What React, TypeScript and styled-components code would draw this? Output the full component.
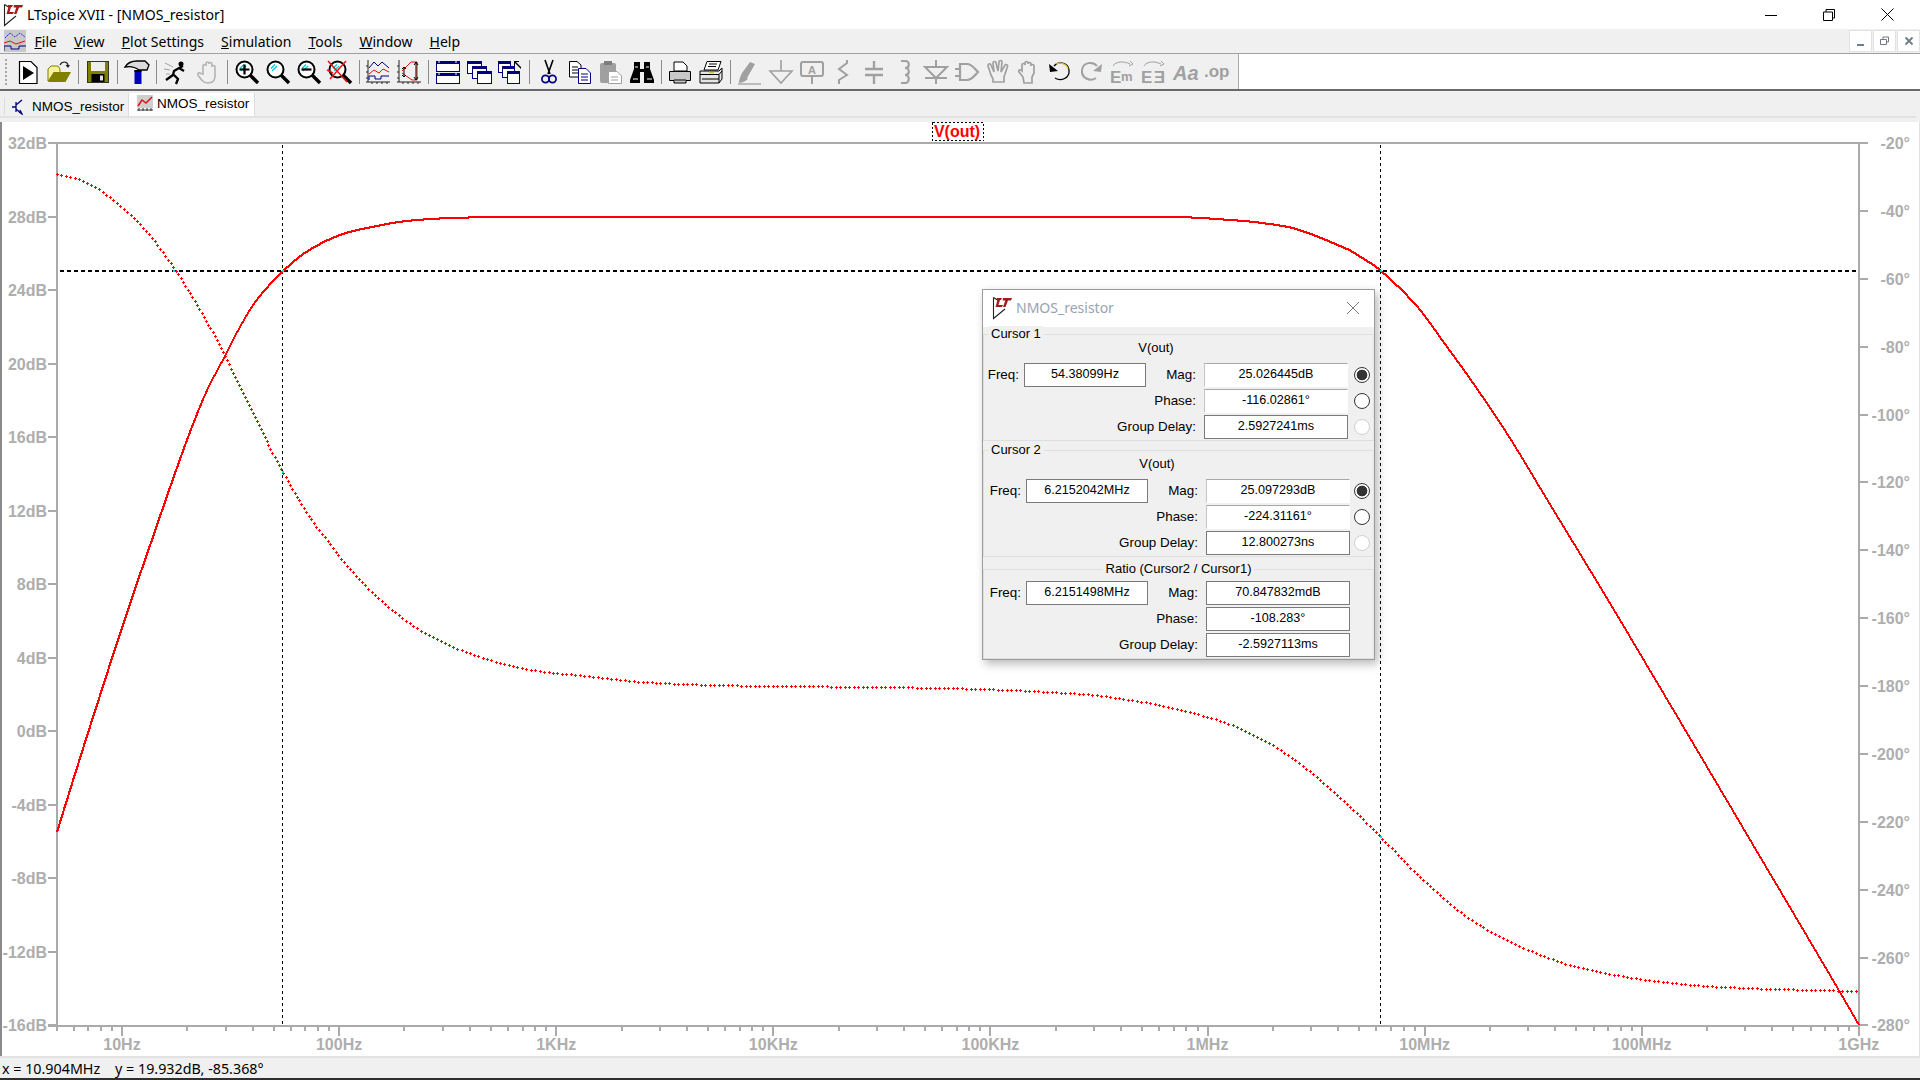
import React from 'react';
import styled, { createGlobalStyle } from 'styled-components';

const UI_FONT = '"Noto Sans", "Open Sans", sans-serif';
const ARIAL = '"Liberation Sans", Arial, sans-serif';

const GlobalStyle = createGlobalStyle`
  html, body { margin: 0; padding: 0; background: #fff; overflow: hidden; }
  #root { width: 1920px; height: 1080px; }
`;

const Page = styled.div`
  width: 1920px;
  height: 1080px;
  display: flex;
  flex-direction: column;
  background: #f0f0f0;
  font-family: ${UI_FONT};
  color: #000;
  overflow: hidden;
`;

/* ---------- title + menu ---------- */

const TitleBar = styled.div`
  height: 29px;
  flex: none;
  background: #fff;
  display: flex;
  align-items: center;
  padding-left: 2px;
`;

const TitleText = styled.span`
  font-size: 14.1px;
  margin-left: 3px;
`;

const WindowButtons = styled.div`
  margin-left: auto;
  margin-right: 3px;
  display: flex;
`;

const WindowButton = styled.div`
  width: 58.5px;
  height: 29px;
  display: flex;
  align-items: center;
  justify-content: center;
`;

const MenuBar = styled.div`
  height: 25px;
  flex: none;
  box-sizing: border-box;
  border-bottom: 1px solid #a0a0a0;
  display: flex;
  align-items: center;
  padding-left: 4px;
`;

const MenuItems = styled.div`
  display: flex;
`;

const MenuItem = styled.span`
  font-size: 14px;
  padding: 0 8.5px;
  &::first-letter { text-decoration: underline; }
`;

const MdiButtons = styled.div`
  margin-left: auto;
  display: flex;
  gap: 1px;
  align-self: flex-start;
  margin-top: 1px;
`;

const MdiButton = styled.div`
  width: 23px;
  height: 22px;
  box-sizing: border-box;
  background: #fff;
  border: 1px solid #e2e2e2;
  display: flex;
  align-items: center;
  justify-content: center;
`;

/* ---------- toolbar ---------- */

const ToolBar = styled.div`
  height: 37px;
  flex: none;
  box-sizing: border-box;
  border-bottom: 2px solid #696969;
  background: #fff;
  display: flex;
`;

const ToolStrip = styled.div`
  width: 1239px;
  box-sizing: border-box;
  background: #f0f0f0;
  border-right: 1px solid #a8a8a8;
  display: flex;
  align-items: center;
  padding-left: 5px;
`;

const Gripper = styled.div`
  width: 2px;
  height: 26px;
  margin-right: 5.5px;
  background: repeating-linear-gradient(to bottom, #a8a8a8 0 2px, transparent 2px 4px);
`;

const Tool = styled.div`
  width: 31.05px;
  height: 26px;
  flex: none;
  display: flex;
  align-items: center;
  justify-content: center;
`;

const ToolSep = styled.div<{ $wide?: boolean }>`
  width: 1px;
  height: 24px;
  flex: none;
  margin: 0 ${p => (p.$wide ? 3.55 : 3.25)}px;
  background: #8c8c8c;
`;

const Glyph = styled.svg`
  width: 24px;
  height: 24px;
  display: block;
  overflow: visible;
`;

const GlyphText = styled.text<{ $size: number; $italic?: boolean }>`
  font-family: ${ARIAL};
  font-weight: bold;
  font-size: ${p => p.$size}px;
  font-style: ${p => (p.$italic ? 'italic' : 'normal')};
  fill: #a0a0a0;
`;

/* ---------- tabs ---------- */

const TabStrip = styled.div`
  height: 27px;
  flex: none;
  box-sizing: border-box;
  border-bottom: 2px solid #e2e2e2;
  margin-right: 4px;
  display: flex;
  align-items: flex-end;
  padding-left: 4px;
`;

const Tab = styled.div<{ $active?: boolean }>`
  width: ${p => (p.$active ? 127 : 124)}px;
  height: ${p => (p.$active ? 23 : 17)}px;
  margin-bottom: ${p => (p.$active ? 0 : 1)}px;
  box-sizing: border-box;
  background: ${p => (p.$active ? '#fff' : '#f0f0f0')};
  border-left: 1px solid #dcdcdc;
  border-right: ${p => (p.$active ? '1px solid #dcdcdc' : 'none')};
  display: flex;
  align-items: center;
  font-family: ${ARIAL};
  font-size: 13.5px;
  padding-left: ${p => (p.$active ? 8 : 6)}px;
  gap: ${p => (p.$active ? 4 : 5)}px;
  padding-bottom: ${p => (p.$active ? 3 : 0)}px;
`;

const TabIcon = styled.svg`
  width: 16px;
  height: 16px;
  flex: none;
`;

/* ---------- plot ---------- */

const PlotPane = styled.div`
  margin-top: 4px;
  flex: 1;
  position: relative;
  background: #fff;
  border-left: 2px solid #8a8a8a;
  border-right: 1px solid #e2e2e2;
  overflow: hidden;
`;

const PlotSvg = styled.svg`
  display: block;
  margin-left: -2px;
  width: 1920px;
  height: 935px;
`;

const AxisLabel = styled.text`
  font-family: ${ARIAL};
  font-weight: bold;
  font-size: 16px;
  fill: #aeaeae;
`;

const TraceName = styled.text`
  font-family: ${ARIAL};
  font-weight: bold;
  font-size: 16px;
  fill: #ff0000;
`;

const StatusBar = styled.div`
  height: 22px;
  flex: none;
  box-sizing: border-box;
  border-top: 2px solid #e2e2e2;
  display: flex;
  align-items: center;
  padding-left: 2px;
  font-size: 14.3px;
  white-space: pre;
`;

const BottomEdge = styled.div`
  height: 2px;
  flex: none;
  background: #2f2f2f;
`;

/* ---------- cursor dialog ---------- */

const Dialog = styled.div`
  position: absolute;
  left: 980px;
  top: 167px;
  width: 393px;
  height: 371px;
  box-sizing: border-box;
  border: 1px solid #9c9c9c;
  background: #f0f0f0;
  box-shadow: 3px 4px 9px rgba(0, 0, 0, 0.28);
  display: flex;
  flex-direction: column;
`;

const DialogTitle = styled.div`
  height: 37px;
  flex: none;
  box-sizing: border-box;
  background: #fff;
  display: flex;
  align-items: center;
  padding-left: 8px;
  padding-bottom: 2px;
`;

const DialogName = styled.span`
  font-size: 14px;
  color: #98a4b0;
  margin-left: 3px;
`;

const DialogClose = styled.svg`
  width: 14px;
  height: 14px;
  margin-left: auto;
  margin-right: 14px;
`;

const Group = styled.div<{ $inset?: boolean; $ratio?: boolean }>`
  position: relative;
  box-sizing: border-box;
  margin-top: ${p => (p.$ratio ? 12 : p.$inset ? 9 : 7)}px;
  border: 1px solid #dedede;
  border-right-color: #e6e6e6;
  padding: ${p => (p.$ratio ? 11 : 2)}px 0 1px ${p => (p.$inset ? 2 : 0)}px;
  display: grid;
  grid-template-columns: 40px 122px 58px 144px 1fr;
  grid-auto-rows: 24px;
  row-gap: 2px;
  font-family: ${ARIAL};
  font-size: 13px;
`;

const Legend = styled.span<{ $center?: boolean }>`
  position: absolute;
  top: -9px;
  left: ${p => (p.$center ? '50%' : '4px')};
  transform: ${p => (p.$center ? 'translateX(-50%)' : 'none')};
  padding: 0 3px;
  background: #f0f0f0;
  line-height: 16px;
  white-space: nowrap;
`;

const TraceLabel = styled.div`
  grid-column: 1 / -1;
  padding-right: 45px;
  text-align: center;
  line-height: 22px;
`;

const Label = styled.div<{ $wide?: boolean; $short?: boolean }>`
  grid-column: ${p => (p.$wide ? '1 / 4' : 'auto')};
  padding-right: ${p => (p.$short ? 5 : 8)}px;
  text-align: right;
  font-size: 13.4px;
  line-height: 24px;
  white-space: nowrap;
`;

const Field = styled.div<{ $soft?: boolean }>`
  box-sizing: border-box;
  background: #fff;
  text-align: center;
  font-size: 12.6px;
  line-height: 21px;
  border: 1px solid ${p => (p.$soft ? '#fff' : '#7a7a7a')};
  border-top-color: ${p => (p.$soft ? '#a8a8a8' : '#7a7a7a')};
  border-left-color: ${p => (p.$soft ? '#c4c4c4' : '#7a7a7a')};
`;

const Radio = styled.div<{ $on?: boolean; $off?: boolean; $inset?: boolean }>`
  width: 16px;
  height: 16px;
  box-sizing: border-box;
  align-self: center;
  margin-left: ${p => (p.$inset ? 4 : 6)}px;
  border-radius: 50%;
  border: 1.5px solid ${p => (p.$off ? '#d0d0d0' : '#333')};
  background: ${p =>
    p.$on ? 'radial-gradient(circle, #333 0 5px, #fff 5.7px)' : '#fff'};
`;

/* ---------- trace data, in page pixels ---------- */

type Pt = [number, number];

const magPoints: Pt[] = [
  [57, 832], [78, 764.5], [97.4, 703.5], [116.5, 644.5], [135.7, 587], [151, 542.5],
  [173.3, 478], [190, 432], [206.7, 391], [225, 356], [240, 327], [256.7, 300],
  [282.7, 271.5], [306.7, 251.7], [340, 235], [373.3, 226.7], [406.7, 221], [460, 217.7],
  [560, 216.8], [700, 216.8], [1050, 216.8], [1175, 217], [1224, 219.5], [1262, 223], [1298, 229.6],
  [1347, 249], [1360, 256.5], [1380.7, 270.7], [1416.7, 306], [1443.3, 341.7], [1476.7, 388.3],
  [1510, 438.3], [1543.3, 493.3], [1576.7, 548.3], [1610, 603.3], [1655, 679],
  [1714.5, 779.5], [1754, 846.5], [1793.6, 913.5], [1833, 980.3], [1859, 1025],
];

const phasePoints: Pt[] = [
  [57, 174.3], [83.3, 181], [106.7, 195], [140, 224], [173.3, 267.3], [206.7, 321.7],
  [225, 356.7], [240, 386.7], [273.3, 455], [282.7, 471.7], [306.7, 513], [327, 540],
  [346, 565], [384.4, 603.3], [422.7, 631.7], [461, 650], [499.2, 662.7], [537.5, 670.7],
  [575.8, 675], [640, 681.7], [700, 684.5], [774, 686], [880, 687], [980, 689],
  [1060, 692.5], [1102, 696], [1165, 706], [1224, 722], [1240, 729], [1279.5, 749.5],
  [1319, 779], [1358.6, 815], [1380.4, 836.7], [1418, 875], [1457.5, 910], [1497, 935],
  [1536.6, 953.3], [1576, 966.7], [1635.4, 978.3], [1694.7, 985], [1754, 988.3], [1856, 991],
];

// y(x) through the read points, sampled one pixel apart
const sample = (pts: Pt[]): Pt[] => {
  const out: Pt[] = [];
  const slope = (i: number) => {
    const a = pts[Math.max(i - 1, 0)];
    const b = pts[Math.min(i + 1, pts.length - 1)];
    return (b[1] - a[1]) / (b[0] - a[0]);
  };
  for (let i = 0; i < pts.length - 1; i++) {
    const [x0, y0] = pts[i];
    const [x1, y1] = pts[i + 1];
    const dx = x1 - x0;
    for (let x = Math.ceil(x0); x < x1; x++) {
      const t = (x - x0) / dx;
      const h00 = 2 * t * t * t - 3 * t * t + 1;
      const h10 = t * t * t - 2 * t * t + t;
      const h01 = -2 * t * t * t + 3 * t * t;
      const h11 = t * t * t - t * t;
      out.push([x, h00 * y0 + h10 * dx * slope(i) + h01 * y1 + h11 * dx * slope(i + 1)]);
    }
  }
  out.push(pts[pts.length - 1]);
  return out;
};

const magLine = sample(magPoints)
  .map(([x, y]) => `${x},${Math.round(y)}`)
  .join(' ');

const phaseMarks = (() => {
  const pts = sample(phasePoints);
  let d = '';
  let run = 4.5;
  for (let i = 1; i < pts.length; i++) {
    const [x, y] = pts[i];
    const prev = pts[i - 1];
    const segment = Math.hypot(x - prev[0], y - prev[1]);
    let from = run;
    let left = segment;
    // a steep pixel step can hold more than one mark
    while (from + left >= 4.5) {
      const use = 4.5 - from;
      const t = (segment - left + use) / segment;
      const mx = Math.round(prev[0] + (x - prev[0]) * t) + 0.5;
      const my = Math.round(prev[1] + (y - prev[1]) * t) + 0.5;
      d += `M${mx - 1.5} ${my}h3M${mx} ${my - 1.5}v3`;
      left -= use;
      from = 0;
    }
    run = from + left;
  }
  return d;
})();

const xOf = (f: number) => 122 + 217.1 * (Math.log10(f) - 1);
const xLabels = ['10Hz', '100Hz', '1KHz', '10KHz', '100KHz', '1MHz', '10MHz', '100MHz', '1GHz'];
const dbTicks = Array.from({ length: 13 }, (_, i) => 32 - i * 4);
const phaseTicks = Array.from({ length: 14 }, (_, i) => -20 - i * 20);
const yOfDb = (db: number) => 143 + (32 - db) * 18.385;
const yOfDeg = (deg: number) => 143 + (-20 - deg) * 3.394;

const logTicks = (() => {
  const minor: number[] = [];
  const major: number[] = [];
  for (let e = 0; e <= 9; e++) {
    for (let m = 1; m <= 9; m++) {
      const f = m * 10 ** e;
      if (f < 5 || f > 1e9) continue;
      (m === 1 ? major : minor).push(xOf(f));
    }
  }
  return { minor, major };
})();

const Plot = () => (
  <PlotSvg viewBox="0 122 1920 935">
    <g stroke="#aaaaaa" strokeWidth="2" shapeRendering="crispEdges" fill="none">
      <path d="M48 143H1868M57 143V1026M1859 143V1026M48 1026H1859" />
      {dbTicks.map(db => (
        <path key={db} d={`M48 ${yOfDb(db)}H57`} />
      ))}
      {phaseTicks.map(deg => (
        <path key={deg} d={`M1859 ${yOfDeg(deg)}H1868`} />
      ))}
      {logTicks.minor.map(x => (
        <path key={x} d={`M${x} 1026V1031`} />
      ))}
      {logTicks.major.map(x => (
        <path key={x} d={`M${x} 1026V1036`} />
      ))}
    </g>
    {dbTicks.map(db => (
      <AxisLabel key={db} x="47" y={yOfDb(db) + 6} textAnchor="end">{db}dB</AxisLabel>
    ))}
    {phaseTicks.map(deg => (
      <AxisLabel key={deg} x="1910" y={yOfDeg(deg) + 6} textAnchor="end">{deg}°</AxisLabel>
    ))}
    {xLabels.map((label, i) => (
      <AxisLabel key={label} x={122 + i * 217.1} y="1050" textAnchor="middle">{label}</AxisLabel>
    ))}
    <g shapeRendering="crispEdges" fill="none" stroke="#000">
      <path d="M60 271H1858" strokeWidth="2" strokeDasharray="4 3" />
      <path d="M282.5 145V1025M1380.5 145V1025" strokeWidth="1" strokeDasharray="3 3" />
    </g>
    <polyline points={magLine} fill="none" stroke="#ff0000" strokeWidth="2" shapeRendering="crispEdges" />
    <path d={phaseMarks} fill="none" stroke="#ff0000" strokeWidth="1" shapeRendering="crispEdges" />
    <path d="M282 270h2v2h-2zM1380 270h2v2h-2zM173 270h2v2h-2zM282 471h2v2h-2zM1380 836h2v2h-2z" fill="#00e0e0" />
    <TraceName x="957" y="137" textAnchor="middle">V(out)</TraceName>
    <rect x="932.5" y="122.5" width="51" height="18" fill="none" stroke="#000" strokeDasharray="2 2" shapeRendering="crispEdges" />
  </PlotSvg>
);

/* ---------- icons ---------- */

const LtLogo = () => (
  <svg width="22" height="24" viewBox="0 0 22 24">
    <path d="M2.5 1.5V22.5L14 13" fill="none" stroke="#222" strokeWidth="1.1" />
    <path d="M2.5 1.5L8 5" fill="none" stroke="#222" strokeWidth="1.1" />
    <path d="M6 2h5l-1 2H9L7.5 9H12l-1 2H4.5L6.5 4H5zM12 2h9l-1 2.5h-3L14.5 11h-2.5l2.3-6.500H11.500z" fill="#a01c1c" />
  </svg>
);

const GRAY = '#a0a0a0';
const NAVY = '#000080';

const magnifier = (extra: React.ReactNode) => (
  <Glyph viewBox="0 0 24 24">
    <path d="M15 15L23 23" stroke="#000" strokeWidth="3.4" />
    <circle cx="9.500" cy="9.500" r="8" fill="#fff" stroke="#000" strokeWidth="2" />
    <path d="M5 8.500L9 4.500M6 11L11 6" stroke="#00c8d8" strokeWidth="1.300" />
    {extra}
  </Glyph>
);

const win = (x: number, y: number, w: number, h: number, key: string) => (
  <g key={key}>
    <rect x={x + 0.5} y={y + 0.5} width={w} height={h} fill="#fff" stroke={NAVY} />
    <rect x={x} y={y} width={w + 1} height="3" fill={NAVY} />
  </g>
);

const toolIcons: Record<string, React.ReactNode> = {
  run: (
    <Glyph viewBox="0 0 24 24">
      <path d="M3.500 1.500H15L21 7.500V23.500H3.500z" fill="#fff" stroke="#000" strokeWidth="1.200" />
      <path d="M7 6L18 13L7 20z" fill="#000" />
    </Glyph>
  ),
  open: (
    <Glyph viewBox="0 0 24 24">
      <path d="M1 9L4 6H11L13 9V13H7L1 21z" fill="#f6f39a" stroke="#808000" />
      <path d="M1 22L6.500 12H24L18.500 22z" fill="#808000" />
      <path d="M13 5C15 1 20 1 21 5" fill="none" stroke="#222" strokeWidth="1.200" />
      <path d="M18.500 5H23L21 8z" fill="#222" />
    </Glyph>
  ),
  save: (
    <Glyph viewBox="0 0 24 24">
      <rect x="1.500" y="1.500" width="21" height="21" fill="#808000" stroke="#333" />
      <rect x="5" y="2" width="14" height="9" fill="#eeeeee" />
      <rect x="5.500" y="14" width="13" height="8" fill="#000" />
      <rect x="14" y="15.500" width="3" height="5" fill="#e0e0e0" />
    </Glyph>
  ),
  hammer: (
    <Glyph viewBox="0 0 24 24">
      <path d="M0 7C3 2 8 1 12 1H20L24 5L22 10H14C10 7 5 6 0 7z" fill="#dcdcdc" stroke="#000" strokeWidth="1.300" />
      <rect x="9.500" y="10" width="7" height="14" fill="#0000c0" />
      <rect x="9.500" y="10" width="7" height="2" fill="#000" />
    </Glyph>
  ),
  runner: (
    <Glyph viewBox="0 0 24 24">
      <path d="M1 3L9 7M0 9L6 10M2 14L6 14" stroke={GRAY} fill="none" />
      <circle cx="17" cy="4" r="2.500" fill="#000" />
      <path d="M20 11L15 8L10 11L9 15L2 20M10 15L14 19L12 24M15 8L19 6" stroke="#000" strokeWidth="2.300" fill="none" />
    </Glyph>
  ),
  hand: (
    <Glyph viewBox="0 0 24 24">
      <path d="M7 14V6a1.500 1.500 0 013 0V3.500a1.500 1.500 0 013 0V4a1.500 1.500 0 013 0V7a1.500 1.500 0 013 0V16C19 21 16 23 12 23C8 23 6 21 2 15C1 13 3 12 5 13.500z" fill="#f0f0f0" stroke="#b4b4b4" strokeWidth="1.600" />
    </Glyph>
  ),
  zoomIn: magnifier(<path d="M4.500 9.500H14.500M9.500 4.500V14.500" stroke="#000" strokeWidth="2.200" />),
  zoomArea: magnifier(null),
  zoomOut: magnifier(<path d="M4.500 9.500H14.500" stroke="#000" strokeWidth="2.200" />),
  zoomFit: magnifier(<path d="M0 1L19 22M18 1L2 19M-1 10L5 13" stroke="#f01010" strokeWidth="1.500" />),
  plot: (
    <Glyph viewBox="0 0 24 24">
      <path d="M2 0V22M0 22H24M0 6H2M0 12H2M0 18H2M6 22V24M11 22V24M16 22V24M21 22V24" stroke="#222" fill="none" />
      <path d="M3 8L8 2L12 6L16 2L23 8" stroke={NAVY} fill="none" />
      <path d="M3 14L8 10L13 13L17 9L23 12" stroke="#e01010" fill="none" />
      <path d="M3 20V16H9V19H15V16H23" stroke={NAVY} fill="none" />
    </Glyph>
  ),
  plotFit: (
    <Glyph viewBox="0 0 24 24">
      <path d="M2 0V22M0 22H24M0 6H2M0 12H2M0 18H2M6 22V24M11 22V24M16 22V24M21 22V24" stroke="#222" fill="none" />
      <path d="M5 11L14 2H20V20H15L5 13" stroke="#e01010" fill="none" />
      <path d="M7 7V17M5 9L7 7L9 9M5 15L7 17L9 15M19 2V20M17 5L19 2L21 5M17 17L19 20L21 17" stroke="#000" fill="none" />
    </Glyph>
  ),
  tile: (
    <Glyph viewBox="0 0 24 24">
      {win(0, 1, 23, 10, 'a')}
      {win(0, 13, 23, 10, 'b')}
      <path d="M2 2H4M19 2H21M2 14H4M19 14H21" stroke="#fff" />
    </Glyph>
  ),
  cascade: (
    <Glyph viewBox="0 0 24 24">
      {win(0, 1, 14, 12, 'a')}
      {win(5, 6, 14, 12, 'b')}
      {win(10, 11, 14, 12, 'c')}
    </Glyph>
  ),
  cascadeUp: (
    <Glyph viewBox="0 0 24 24">
      {win(0, 1, 12, 11, 'a')}
      {win(4, 6, 12, 11, 'b')}
      {win(9, 11, 12, 12, 'c')}
      <path d="M16 1H21V2H18L23 7V9L17 3V6H16z" fill="#000" />
    </Glyph>
  ),
  cut: (
    <Glyph viewBox="0 0 24 24">
      <path d="M8 0L13 14M16 0L11 14" stroke="#000" strokeWidth="1.600" fill="none" />
      <circle cx="8.500" cy="19" r="3.600" fill="none" stroke={NAVY} strokeWidth="1.700" />
      <circle cx="15.500" cy="19" r="3.600" fill="none" stroke={NAVY} strokeWidth="1.700" />
    </Glyph>
  ),
  copy: (
    <Glyph viewBox="0 0 24 24">
      <path d="M1.500 1.500H9L13 5V17H1.500z" fill="#fff" stroke="#000" />
      <path d="M4 7H10M4 10H10M4 13H10" stroke="#000" />
      <path d="M10.500 8.500H18L22.500 13V23.500H10.500z" fill="#fff" stroke={NAVY} />
      <path d="M13 14H20M13 17H20M13 20H20" stroke={NAVY} />
    </Glyph>
  ),
  paste: (
    <Glyph viewBox="0 0 24 24">
      <rect x="1" y="3" width="16" height="20" fill={GRAY} rx="2" />
      <rect x="5" y="1" width="8" height="4" fill="#7c7c7c" />
      <path d="M9.500 11.500H18L22.500 16V23.500H9.500z" fill="#fff" stroke={GRAY} />
      <path d="M12 17H19M12 20H19" stroke={GRAY} />
    </Glyph>
  ),
  find: (
    <Glyph viewBox="0 0 24 24">
      <path d="M4 2H10V9H14V2H20V9L24 20V23H14V12H10V23H0V20L4 9z" fill="#000" />
      <path d="M3 19H8M17 19H22M5 7H8M16 7H19" stroke="#fff" />
    </Glyph>
  ),
  print: (
    <Glyph viewBox="0 0 24 24">
      <path d="M6 2H15L19 6V11H6z" fill="#fff" stroke="#000" />
      <path d="M1.500 11.500H22.500V20.500H18V23H6V20.500H1.500z" fill="#c8c8c8" stroke="#000" />
      <path d="M6 20H18" stroke="#000" />
    </Glyph>
  ),
  printSetup: (
    <Glyph viewBox="0 0 24 24">
      <path d="M8 1.500H22L19 10H5z" fill="#fff" stroke="#000" />
      <path d="M10 4H18M9 6.500H17" stroke="#000" />
      <path d="M1 11H20L23 8V19L20 23H1z" fill="#e6e6e6" stroke="#000" />
      <path d="M1 14.500H20V23M20 14.500L23 11M3 19H20" stroke="#000" fill="none" />
      <path d="M10 12.500H15" stroke="#d8c040" strokeWidth="1.500" />
    </Glyph>
  ),
  wire: (
    <Glyph viewBox="0 0 24 24">
      <path d="M10 19C6 22 3 23 1 23C1 20 2 17 4 13L12 2L17 4L9 18z" fill={GRAY} />
      <path d="M0 24H23" stroke={GRAY} strokeWidth="1.300" />
    </Glyph>
  ),
  ground: (
    <Glyph viewBox="0 0 24 24">
      <path d="M12 0V11M1 11H23L12 23z" stroke={GRAY} strokeWidth="1.600" fill="none" />
    </Glyph>
  ),
  label: (
    <Glyph viewBox="0 0 24 24">
      <rect x="1" y="2" width="22" height="14" rx="2" fill="none" stroke={GRAY} strokeWidth="2" />
      <GlyphText x="8" y="13.500" $size={11}>A</GlyphText>
      <path d="M12 16V24" stroke={GRAY} strokeWidth="2" />
    </Glyph>
  ),
  resistor: (
    <Glyph viewBox="0 0 24 24">
      <path d="M16 0V3L8 9L16 15L8 20V24" stroke={GRAY} strokeWidth="2" fill="none" />
    </Glyph>
  ),
  capacitor: (
    <Glyph viewBox="0 0 24 24">
      <path d="M12 1V9M3 9H21M3 15H21M12 15V24" stroke={GRAY} strokeWidth="2.400" fill="none" />
    </Glyph>
  ),
  inductor: (
    <Glyph viewBox="0 0 24 24">
      <path d="M8 1H12C17 1 17 8 12 8C17 8 17 15 12 15C17 15 17 23 12 23H8" stroke={GRAY} strokeWidth="2.200" fill="none" />
    </Glyph>
  ),
  diode: (
    <Glyph viewBox="0 0 24 24">
      <path d="M12 0V7M1 7H23L12 18zM1 18H23M12 18V24" stroke={GRAY} strokeWidth="2" fill="none" />
    </Glyph>
  ),
  gate: (
    <Glyph viewBox="0 0 24 24">
      <path d="M5 4H12C17 4 19 8 23 12C19 16 17 20 12 20H5zM0 9H5M0 16H5" stroke={GRAY} strokeWidth="2.200" fill="none" />
    </Glyph>
  ),
  handOpen: (
    <Glyph viewBox="0 0 24 24">
      <path d="M5 15L2 6a1.500 1.500 0 013-1L8 12L7 3a1.500 1.500 0 013 0L12 11L13 2a1.500 1.500 0 013 0L15 12L19 5a1.500 1.500 0 012.500 1.500L18 17V22H7V19z" fill="#f0f0f0" stroke={GRAY} strokeWidth="1.700" />
    </Glyph>
  ),
  handMove: (
    <Glyph viewBox="0 0 24 24">
      <path d="M6 17L2 12C1 10 3 9 5 11V5a1.500 1.500 0 013 0V3a1.500 1.500 0 013 0V4a1.500 1.500 0 013 0V6a1.500 1.500 0 013 0V13L15 17V23H7z" fill="#f0f0f0" stroke={GRAY} strokeWidth="1.700" />
    </Glyph>
  ),
  undo: (
    <Glyph viewBox="0 0 24 24">
      <path d="M6 6C10 1 20 2 21 10C22 18 13 22 7 18" fill="none" stroke="#000" strokeWidth="1.300" />
      <path d="M8 4C13 2 19 4 20 9" fill="none" stroke="#d8c040" strokeWidth="1.300" />
      <path d="M1 4L2 12L10 11z" fill="#000" />
    </Glyph>
  ),
  redo: (
    <Glyph viewBox="0 0 24 24">
      <path d="M18 6C14 1 4 2 3 10C2 18 11 22 17 18" fill="none" stroke={GRAY} strokeWidth="2" />
      <path d="M23 4L22 12L14 11z" fill={GRAY} />
    </Glyph>
  ),
  rotate: (
    <Glyph viewBox="0 0 24 24">
      <path d="M3 6C6 1 14 1 20 4M20 1L23 4L19 6" stroke={GRAY} fill="none" />
      <GlyphText x="0" y="23" $size={17}>E</GlyphText>
      <GlyphText x="11" y="21" $size={13}>m</GlyphText>
    </Glyph>
  ),
  mirror: (
    <Glyph viewBox="0 0 24 24">
      <path d="M3 6C6 1 14 1 20 4M20 1L23 4L19 6" stroke={GRAY} fill="none" />
      <GlyphText x="0" y="23" $size={17}>E</GlyphText>
      <GlyphText x="24" y="23" $size={17} textAnchor="end">Ǝ</GlyphText>
    </Glyph>
  ),
  font: (
    <Glyph viewBox="0 0 24 24">
      <GlyphText x="0" y="20" $size={20} $italic>Aa</GlyphText>
    </Glyph>
  ),
  spice: (
    <Glyph viewBox="0 0 24 24">
      <GlyphText x="0" y="17" $size={17}>.op</GlyphText>
    </Glyph>
  ),
};

// '||' is a slightly wider separator, as in the first groups of the real bar
const toolbarLayout = [
  'run', 'open', '||', 'save', '||', 'hammer', '||', 'runner', 'hand', '||',
  'zoomIn', 'zoomArea', 'zoomOut', 'zoomFit', '|', 'plot', 'plotFit', '|',
  'tile', 'cascade', 'cascadeUp', '|', 'cut', 'copy', 'paste', 'find', '|',
  'print', 'printSetup', '|', 'wire', 'ground', 'label', 'resistor', 'capacitor',
  'inductor', 'diode', 'gate', 'handOpen', 'handMove', 'undo', 'redo', 'rotate',
  'mirror', 'font', 'spice',
];

const menus = ['File', 'View', 'Plot Settings', 'Simulation', 'Tools', 'Window', 'Help'];

/* ---------- dialog data ---------- */

const RowLabels = ['Mag:', 'Phase:', 'Group Delay:'];

interface Readout {
  freq: string;
  values: string[];
}

const cursor1: Readout = { freq: '54.38099Hz', values: ['25.026445dB', '-116.02861°', '2.5927241ms'] };
const cursor2: Readout = { freq: '6.2152042MHz', values: ['25.097293dB', '-224.31161°', '12.800273ns'] };
const ratio: Readout = { freq: '6.2151498MHz', values: ['70.847832mdB', '-108.283°', '-2.5927113ms'] };

const ReadoutRows: React.FC<{ data: Readout; radios?: boolean; inset?: boolean }> = ({ data, radios, inset }) => (
  <>
    <Label $short>Freq:</Label>
    <Field>{data.freq}</Field>
    <Label>{RowLabels[0]}</Label>
    <Field $soft={radios}>{data.values[0]}</Field>
    {radios ? <Radio $on $inset={inset} /> : <span />}
    <Label $wide>{RowLabels[1]}</Label>
    <Field $soft={radios}>{data.values[1]}</Field>
    {radios ? <Radio $inset={inset} /> : <span />}
    <Label $wide>{RowLabels[2]}</Label>
    <Field>{data.values[2]}</Field>
    {radios ? <Radio $off $inset={inset} /> : <span />}
  </>
);

const CursorDialog = () => (
  <Dialog>
    <DialogTitle>
      <LtLogo />
      <DialogName>NMOS_resistor</DialogName>
      <DialogClose viewBox="0 0 14 14">
        <path d="M1 1L13 13M13 1L1 13" stroke="#7a7a7a" strokeWidth="1" />
      </DialogClose>
    </DialogTitle>
    <Group>
      <Legend>Cursor 1</Legend>
      <TraceLabel>V(out)</TraceLabel>
      <ReadoutRows data={cursor1} radios />
    </Group>
    <Group $inset>
      <Legend>Cursor 2</Legend>
      <TraceLabel>V(out)</TraceLabel>
      <ReadoutRows data={cursor2} radios inset />
    </Group>
    <Group $inset $ratio>
      <Legend $center>Ratio (Cursor2 / Cursor1)</Legend>
      <ReadoutRows data={ratio} />
    </Group>
  </Dialog>
);

const App = () => (
  <Page>
    <GlobalStyle />
    <TitleBar>
      <LtLogo />
      <TitleText>LTspice XVII - [NMOS_resistor]</TitleText>
      <WindowButtons>
        <WindowButton>
          <svg width="12" height="12" viewBox="0 0 12 12"><path d="M0 6.500H12" stroke="#000" /></svg>
        </WindowButton>
        <WindowButton>
          <svg width="12" height="12" viewBox="0 0 12 12">
            <path d="M.5 3H9.500V11.500H.5zM3 3V.5H11.500V9H9.500" fill="none" stroke="#000" />
          </svg>
        </WindowButton>
        <WindowButton>
          <svg width="13" height="13" viewBox="0 0 13 13"><path d="M.5 .5L12.500 12.500M12.500 .5L.5 12.500" stroke="#000" /></svg>
        </WindowButton>
      </WindowButtons>
    </TitleBar>
    <MenuBar>
      <svg width="22" height="22" viewBox="0 0 22 22">
        <rect width="22" height="22" fill="#c8c8c8" />
        <path d="M1 8L6 3L11 7L16 3L21 7" stroke="#2a2ad0" fill="none" strokeDasharray="2 1" />
        <path d="M0 13L6 11L12 14L21 11" stroke="#e01010" fill="none" />
        <path d="M0 21V16H7V19H15V16H22" stroke="#000080" fill="none" />
      </svg>
      <MenuItems>
        {menus.map(m => <MenuItem key={m}>{m}</MenuItem>)}
      </MenuItems>
      <MdiButtons>
        <MdiButton>
          <svg width="10" height="10" viewBox="0 0 10 10"><path d="M1 9H8" stroke="#6f7b85" strokeWidth="2" /></svg>
        </MdiButton>
        <MdiButton>
          <svg width="10" height="10" viewBox="0 0 10 10">
            <path d="M.5 3.500H6.500V8.500H.5zM3 3V1H8.500V6H7" fill="none" stroke="#6f7b85" />
          </svg>
        </MdiButton>
        <MdiButton>
          <svg width="10" height="10" viewBox="0 0 10 10"><path d="M1.500 1.500L8.500 8.500M8.500 1.500L1.500 8.500" stroke="#6f7b85" strokeWidth="1.800" /></svg>
        </MdiButton>
      </MdiButtons>
    </MenuBar>
    <ToolBar>
      <ToolStrip>
        <Gripper />
        {toolbarLayout.map((id, i) =>
          id.startsWith('|') ? <ToolSep key={i} $wide={id === '||'} /> : <Tool key={id}>{toolIcons[id]}</Tool>,
        )}
      </ToolStrip>
    </ToolBar>
    <TabStrip>
      <Tab>
        <TabIcon viewBox="0 0 16 16">
          <path d="M1 8H5M5 3V13M5 6L11 1M5 10L11 15M8 13L11 15L9 11" fill="none" stroke="#000080" strokeWidth="1.300" />
        </TabIcon>
        NMOS_resistor
      </Tab>
      <Tab $active>
        <TabIcon viewBox="0 0 16 16">
          <rect width="16" height="13" fill="#cfcfcf" />
          <path d="M1 11L5 5L9 8L15 2" fill="none" stroke="#e01010" strokeWidth="1.500" />
          <path d="M0 15H16M2 13V16M6 13V16M10 13V16M14 13V16" stroke="#333" />
        </TabIcon>
        NMOS_resistor
      </Tab>
    </TabStrip>
    <PlotPane>
      <Plot />
      <CursorDialog />
    </PlotPane>
    <StatusBar>x = 10.904MHz    y = 19.932dB, -85.368°</StatusBar>
    <BottomEdge />
  </Page>
);

export default App;
